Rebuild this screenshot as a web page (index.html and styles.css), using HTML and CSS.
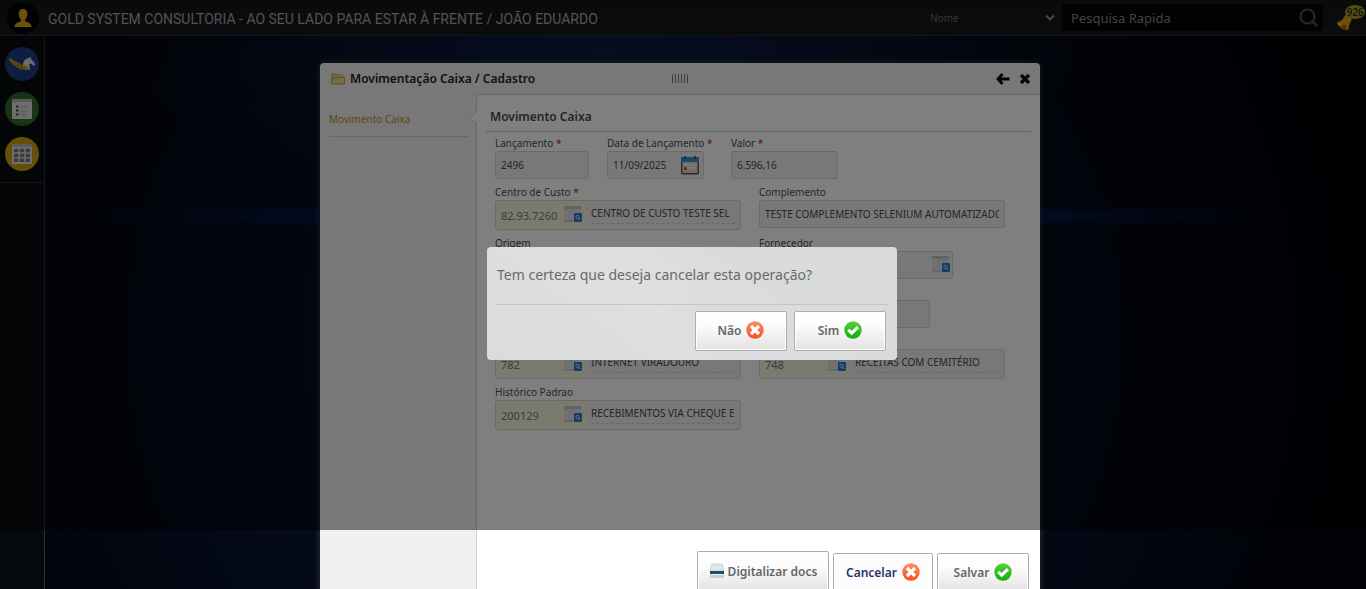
FILE: index.html
```html
<!DOCTYPE html>
<html lang="pt-BR">
<head>
<meta charset="utf-8">
<meta name="viewport" content="width=device-width, initial-scale=1">
<title>Movimentação Caixa / Cadastro</title>
<link rel="stylesheet" href="styles.css">
</head>
<body>
<svg class="defs" aria-hidden="true">
  <defs>
    <linearGradient id="gRed" x1="0" y1="0" x2="0" y2="1"><stop offset="0" stop-color="#ff8c62"/><stop offset="1" stop-color="#f4521e"/></linearGradient>
    <linearGradient id="gGreen" x1="0" y1="0" x2="0" y2="1"><stop offset="0" stop-color="#5bd03a"/><stop offset="1" stop-color="#12ae0c"/></linearGradient>
    <symbol id="no" viewBox="0 0 18 18"><circle cx="9" cy="9" r="8.7" fill="url(#gRed)"/><path d="M5 5l8 8M13 5l-8 8" stroke="#fff" stroke-width="3.2"/></symbol>
    <symbol id="yes" viewBox="0 0 18 18"><circle cx="9" cy="9" r="8.7" fill="url(#gGreen)"/><path d="M4.200 8.800l3.500 3.400 6.200-6" fill="none" stroke="#fff" stroke-width="3"/></symbol>
    <symbol id="lookup" viewBox="0 0 20 18"><rect x="1" y="0" width="17" height="15" rx="1" fill="#e2e3e7"/><path d="M1 3V1q0-1 1-1h15q1 0 1 1v2z" fill="#c6c7cc"/><path d="M7 4v10M12 4v10" stroke="#d6d7dc"/><path d="M1 15h10" stroke="#b4b6bb"/><rect x="11" y="7" width="8" height="9" rx="1" fill="#2f78d0"/><circle cx="14.600" cy="11" r="1.700" fill="none" stroke="#c8dff8" stroke-width="1"/><path d="M15.800 12.400l1.400 1.600" stroke="#c8dff8"/></symbol>
  </defs>
</svg>

<header class="topbar">
  <span class="avatar"><svg width="18" height="18" viewBox="0 0 18 18"><path d="M9 0c3 0 4.600 2 4.300 5-.1 2.700-1 4-2.100 5v2.300c2 1.200 6.300 1.700 6.300 5.700H.5c0-4 4.300-4.500 6.300-5.700V10C5.700 9 4.800 7.700 4.700 5 4.400 2 6 0 9 0z" fill="#d9a514"/></svg></span>
  <h1 class="company">GOLD SYSTEM CONSULTORIA - AO SEU LADO PARA ESTAR À FRENTE / JOÃO EDUARDO</h1>
  <div class="by">
    <select class="by-select" aria-label="Nome"><option>Nome</option></select>
    <svg class="by-arrow" width="10" height="8" viewBox="0 0 10 8"><path d="M1 1.500l4 4 4-4" fill="none" stroke="#8d8f90" stroke-width="2"/></svg>
  </div>
  <form class="search">
    <input class="search-input" type="text" placeholder="Pesquisa Rapida" aria-label="Pesquisa Rapida">
    <button class="icon-button" type="button" aria-label="Pesquisa"><svg width="20" height="20" viewBox="0 0 20 20"><circle cx="8.500" cy="8.500" r="7" fill="none" stroke="#4a4c4d" stroke-width="2.200"/><path d="M13.500 13.500l4.500 4.500" stroke="#4a4c4d" stroke-width="3"/></svg></button>
  </form>
  <button class="bell icon-button" type="button">
    <svg width="18" height="18" viewBox="0 0 18 18"><path d="M9.500 2c3-1.500 7 2 6 5-1.500 3-2.500 4-3 9.500L1.500 9.500C6 8 7.500 5 9.500 2z" fill="#d99f12"/><path d="M1 9.500c2-1 5 0 7 2s4.500 3 4.500 5c-4 1-11-3-11.500-7z" fill="#e0b020"/><ellipse cx="8" cy="14" rx="3" ry="2.500" fill="#b85f16"/></svg>
    <span class="badge">926</span>
  </button>
</header>

<div class="shell">
  <nav class="rail">
    <a class="app app-blue" href="#" aria-label="Gold"><svg width="28" height="16" viewBox="0 0 28 16"><path d="M1 2l13 7 5-1c2 1 3 3 3 6-8 0-11-1-12.500-2.500L8 11 7 9.500 5 9 4.500 7.500 3 7l-.3-1.700L1.500 4z" fill="#d2a52a"/><path d="M3 5l12 6M5 7.500l10 4.500M8 10l9 3" stroke="#8b6912" stroke-width=".7"/><path d="M15 9c0-4 3-7 6.500-7L23 .5V3l3 3 1 3-1 1-3-2.500-2 .5c1 2 .6 4 1 6-1-3-3-5-7-5z" fill="#d6d8dc"/></svg></a>
    <a class="app app-green" href="#" aria-label="Cadastros"><svg width="20" height="20" viewBox="0 0 20 20"><rect width="20" height="20" rx="1" fill="#dcdcdc"/><rect width="20" height="3" fill="#b5b5b5"/><path d="M4 7.500h2.500M4 11.500h2.500M4 15.500h2.500" stroke="#444" stroke-width="2"/><path d="M8 7h6M8 8.500h8M8 11h5M8 12.500h8M8 15h6M8 16.500h8" stroke="#b9b9b9" stroke-width=".8"/></svg></a>
    <a class="app app-gold" href="#" aria-label="Tabelas"><svg width="20" height="20" viewBox="0 0 20 20"><rect width="20" height="20" rx="1" fill="#dcdcdc"/><rect width="20" height="3" fill="#b5b5b5"/><path d="M2 6.500h16M2 11.500h16M2 16.300h16" stroke="#777" stroke-width="3.600" stroke-dasharray="4.400 1.400"/></svg></a>
  </nav>

  <main class="desktop">
    <section class="window">
      <header class="window-head">
        <svg width="14" height="13" viewBox="0 0 14 13"><path d="M1 11V2h4l1 1h6v3" fill="#e8cf86" stroke="#bf9d4e"/><path d="M8 1h4v3H8z" fill="#cfe3cf"/><path d="M.5 12V6.500h4l1-1h8V12z" fill="#f3d98c" stroke="#bf9d4e"/></svg>
        <h2 class="window-title">Movimentação Caixa / Cadastro</h2>
        <span class="grip"></span>
        <span class="window-tools">
          <button class="icon-button" type="button" aria-label="Voltar"><svg width="14" height="12" viewBox="0 0 14 12"><path d="M6.500 1L2 6l4.500 5M2 6h11.500" fill="none" stroke="#000" stroke-width="2.800"/></svg></button>
          <button class="icon-button" type="button" aria-label="Fechar"><svg width="12" height="12" viewBox="0 0 12 12"><path d="M2 2l8 8M10 2l-8 8" stroke="#111" stroke-width="3.400"/></svg></button>
        </span>
      </header>
      <div class="window-body">
        <nav class="tabs">
          <a class="tab" href="#">Movimento Caixa</a>
          <svg class="tab-arrow" width="10" height="12" viewBox="0 0 10 12"><path d="M10 1L1 6l9 5" fill="#fff" stroke="#ddd"/></svg>
        </nav>
        <form class="content">
          <h3 class="content-title">Movimento Caixa</h3>
          <div class="rows">
            <div class="row">
              <div class="field slot-a"><label class="label" for="lanc">Lançamento <i>*</i></label><input class="box" id="lanc" value="2496"></div>
              <div class="field slot-b"><label class="label" for="data">Data de Lançamento <i>*</i></label>
                <div class="box date"><input class="bare" id="data" value="11/09/2025"><button class="icon-button" type="button" aria-label="Data"><svg width="18" height="19" viewBox="0 0 18 19"><rect x=".7" y="1.700" width="16.600" height="16" rx="1" fill="#d8d8d8" stroke="#6d4a45" stroke-width="1.400"/><path d="M0 6V2q0-1 1-1h16q1 0 1 1v4z" fill="#3a92c4"/><path d="M4 0v3M14 0v3" stroke="#1a5c86" stroke-width="1.600"/><path d="M3 9h12M3 12h12" stroke="#f4f4f4" stroke-width="2"/><circle cx="4.500" cy="12.500" r="1.500" fill="#dc2f23"/></svg></button></div></div>
              <div class="field slot-c"><label class="label" for="valor">Valor <i>*</i></label><input class="box" id="valor" value="6.596,16"></div>
            </div>
            <div class="row">
              <div class="field half"><label class="label" for="centro">Centro de Custo <i>*</i></label>
                <div class="lookup"><span class="code"><input class="bare" id="centro" value="82.93.7260"><button class="icon-button" type="button" aria-label="Pesquisar"><svg width="20" height="18"><use href="#lookup"/></svg></button></span><input class="desc" aria-label="Centro de Custo" value="CENTRO DE CUSTO TESTE SEL" readonly></div></div>
              <div class="field half"><label class="label" for="compl">Complemento</label><input class="box" id="compl" value="TESTE COMPLEMENTO SELENIUM AUTOMATIZADO"></div>
            </div>
            <div class="row">
              <div class="field half"><label class="label" for="origem">Origem</label><input class="box short" id="origem"></div>
              <div class="field half"><label class="label" for="forn">Fornecedor</label>
                <div class="box date wide"><input class="bare" id="forn"><button class="icon-button" type="button" aria-label="Pesquisar"><svg width="20" height="18"><use href="#lookup"/></svg></button></div></div>
            </div>
            <div class="row">
              <div class="field half"><span class="label"></span></div>
              <div class="field half"><span class="label"></span><input class="box short" aria-label="Documento"></div>
            </div>
            <div class="row">
              <div class="field half"><span class="label"></span>
                <div class="lookup"><span class="code"><input class="bare" aria-label="Código" value="782"><button class="icon-button" type="button" aria-label="Pesquisar"><svg width="20" height="18"><use href="#lookup"/></svg></button></span><input class="desc" aria-label="Descrição" value="INTERNET VIRADOURO" readonly></div></div>
              <div class="field half"><span class="label"></span>
                <div class="lookup"><span class="code"><input class="bare" aria-label="Código" value="748"><button class="icon-button" type="button" aria-label="Pesquisar"><svg width="20" height="18"><use href="#lookup"/></svg></button></span><input class="desc" aria-label="Descrição" value="RECEITAS COM CEMITÉRIO" readonly></div></div>
            </div>
            <div class="row">
              <div class="field half"><label class="label" for="hist">Histórico Padrao</label>
                <div class="lookup"><span class="code"><input class="bare" id="hist" value="200129"><button class="icon-button" type="button" aria-label="Pesquisar"><svg width="20" height="18"><use href="#lookup"/></svg></button></span><input class="desc" aria-label="Histórico Padrao" value="RECEBIMENTOS VIA CHEQUE E" readonly></div></div>
            </div>
          </div>
          <footer class="actions">
            <button class="button scan" type="button"><svg width="16" height="16" viewBox="0 0 16 16"><path d="M3 1h10l2 7H1z" fill="#e2e5e8" stroke="#b9bec3" stroke-width=".6"/><path d="M1 8h14v6q0 1-1 1H2q-1 0-1-1z" fill="#c9cdd2"/><path d="M1 8h14v3H1z" fill="#175069"/><path d="M2 11h12v1H2z" fill="#f3f6f8"/></svg>Digitalizar docs</button>
            <button class="button cancel" type="button">Cancelar<svg width="18" height="18"><use href="#no"/></svg></button>
            <button class="button" type="button">Salvar<svg width="18" height="18"><use href="#yes"/></svg></button>
          </footer>
        </form>
      </div>
    </section>
  </main>
</div>

<div class="overlay"></div>
<div class="dialog" role="alertdialog" aria-labelledby="question">
  <p class="question" id="question">Tem certeza que deseja cancelar esta operação?</p>
  <div class="answers">
    <button class="button" type="button">Não<svg width="18" height="18"><use href="#no"/></svg></button>
    <button class="button" type="button">Sim<svg width="18" height="18"><use href="#yes"/></svg></button>
  </div>
</div>
</body>
</html>
```
FILE: styles.css
```css
* { box-sizing: border-box; }

body {
  margin: 0;
  height: 100vh;
  overflow: hidden;
  position: relative;
  display: flex;
  flex-direction: column;
  background: #010208;
  font-family: "Noto Sans", "Open Sans", sans-serif;
  font-size: 10px;
  color: #555;
}

h1, h2, h3, p { margin: 0; }
svg { display: block; flex: none; }
input, button, select { font: inherit; color: inherit; }
.defs { position: absolute; width: 0; height: 0; }

.icon-button {
  display: flex;
  padding: 0;
  border: 0;
  background: none;
}

/* Top bar */
.topbar {
  display: flex;
  align-items: center;
  flex: none;
  height: 36px;
  padding-left: 7px;
  background: linear-gradient(#101417, #16191b);
  border-bottom: 1px solid #2b2b2b;
}
.avatar {
  display: flex;
  align-items: center;
  justify-content: center;
  width: 32px;
  height: 32px;
  border-radius: 50%;
  background: #050505;
}
.company {
  flex: 1;
  padding: 2px 0 0 9px;
  font: 14px Roboto, "Open Sans", sans-serif;
  white-space: nowrap;
  color: #a4a6a8;
}
.by {
  display: flex;
  align-items: center;
  width: 125px;
  margin-right: 7px;
}
.by-select {
  flex: 1;
  min-width: 0;
  appearance: none;
  border: 0;
  padding: 0;
  background: none;
  color: #717171;
}
.search {
  display: flex;
  align-items: center;
  width: 261px;
  height: 27px;
  padding: 0 4px 0 9px;
  border-radius: 3px;
  background: #050505;
}
.search-input {
  flex: 1;
  min-width: 0;
  border: 0;
  padding: 0;
  background: none;
  font-size: 13px;
}
.search-input::placeholder { color: #858585; opacity: 1; }
.bell {
  position: relative;
  align-items: flex-end;
  width: 30px;
  height: 26px;
  margin-left: 13px;
}
.badge {
  position: absolute;
  top: 0;
  right: 1px;
  width: 20px;
  border-radius: 50%;
  background: #aa9a1c;
  color: #303030;
  font-size: 10px;
  font-weight: 600;
  line-height: 14px;
  text-align: center;
}

/* Left rail and desktop */
.shell { flex: 1; display: flex; min-height: 0; }
.rail {
  flex: none;
  width: 45px;
  display: flex;
  flex-direction: column;
  align-items: center;
  gap: 11px;
  padding-top: 11px;
  border-right: 1px solid #2e3032;
  background: linear-gradient(#2a2a2a, #2a2a2a) 0 146px / 100% 1px no-repeat, #070a0d;
}
.app {
  display: flex;
  align-items: center;
  justify-content: center;
  width: 34px;
  height: 34px;
  border-radius: 50%;
}
.app-blue { background: #1c3c7c; }
.app-green { background: #2f6a29; }
.app-gold { background: #cda013; }
.desktop {
  flex: 1;
  padding: 27px 0 0 275px;
  background:
    radial-gradient(ellipse 620px 14px at 638px 180px, rgba(8, 50, 160, .7), transparent),
    radial-gradient(ellipse 480px 160px at 560px 20px, rgba(18, 42, 96, .5), transparent),
    radial-gradient(ellipse 720px 700px at 580px 300px, #071430, #010207);
}

/* Window */
.window {
  width: 720px;
  border-radius: 4px;
  background: #f0f0f0;
  box-shadow: 0 0 6px #3a3a34;
}
.window-head {
  display: flex;
  align-items: center;
  height: 31px;
  padding: 0 9px 0 11px;
  gap: 5px;
}
.window-title {
  width: 317px;
  font-size: 12px;
  font-weight: 600;
  line-height: 16px;
  color: #222;
}
.grip {
  width: 16px;
  height: 9px;
  background: repeating-linear-gradient(90deg, #808080 0 1px, transparent 1px 3px);
}
.window-tools { display: flex; align-items: center; gap: 9px; margin-left: auto; }
.window-body { display: flex; }
.tabs { position: relative; flex: none; width: 156px; padding: 17px 8px 0 9px; }
.tab {
  display: block;
  padding-bottom: 9px;
  border-bottom: 1px solid #ccc;
  font-size: 10px;
  line-height: 16px;
  text-decoration: none;
  color: #b8922c;
}
.tab-arrow { position: absolute; top: 18px; right: -1px; }
.content {
  flex: 1;
  min-width: 0;
  display: flex;
  flex-direction: column;
  border: 1px solid #d0d0d0;
  border-width: 1px 0 0 1px;
  border-radius: 4px 0 0 0;
  background: #fff;
  padding: 13px 9px 0;
}
.content-title {
  padding: 0 4px 5px;
  border-bottom: 1px solid #c4c4c4;
  font-size: 12px;
  font-weight: 600;
  line-height: 18px;
  color: #4a4a4a;
}

/* Form */
.rows { display: flex; flex-direction: column; gap: 7px; min-height: 414px; padding: 5px 9px 0; }
.row { display: flex; }
.slot-a { width: 94px; margin-right: 18px; }
.slot-b { width: 124px; }
.slot-c { width: 107px; }
.half { width: 246px; margin-right: 18px; }
.half:last-child { margin-right: 0; }
.label { display: block; height: 14px; font-size: 10px; line-height: 12px; white-space: nowrap; color: #4c4c4c; }
.label i { font-style: normal; color: #b3302a; }
.box {
  display: block;
  width: 100%;
  height: 28px;
  padding: 0 5px;
  border: 1px solid #d4d4d4;
  border-radius: 3px;
  background: #f0f0f0;
  font-size: 10px;
  color: #4a4a4a;
}
.date { display: flex; align-items: center; width: 97px; padding-right: 4px; }
.wide { width: 194px; padding-right: 1px; }
.short { width: 171px; }
.bare { flex: 1; min-width: 0; width: 0; padding: 0; border: 0; background: none; }
.lookup {
  display: flex;
  height: 30px;
  border: 1px solid #d4d4d4;
  border-radius: 3px;
  background: #f0f0f0;
}
.code {
  display: flex;
  align-items: center;
  width: 91px;
  padding: 0 4px 0 5px;
  background: #f7f4df;
}
.code .bare { font-size: 11px; line-height: 16px; padding-top: 2px; color: #777; }
.desc {
  flex: 1;
  min-width: 0;
  height: 22px;
  margin: 1px 5px 0 4px;
  padding: 0;
  border: 0;
  border-bottom: 1px dashed #d0d0d0;
  background: none;
  color: #4a4a4a;
}

/* Buttons */
.button {
  display: flex;
  align-items: center;
  justify-content: center;
  gap: 5px;
  width: 92px;
  height: 40px;
  padding: 0 0 2px;
  border: 1px solid #adadad;
  border-radius: 2px;
  background: linear-gradient(#fff, #fcfcfc 35%, #e2e2e2);
  box-shadow: inset 0 0 0 1px #fff;
  font-size: 12px;
  font-weight: 600;
  color: #666;
  white-space: nowrap;
}
.scan { width: 132px; height: 42px; gap: 3px; }
.cancel { width: 100px; background: #fcfcfd; color: #2a3270; }
.actions { display: flex; align-items: flex-end; justify-content: flex-end; gap: 4px; padding: 5px 2px 20px; }

/* Confirmation */
.overlay { position: absolute; inset: 0 0 auto; height: 90%; background: rgba(0, 0, 0, .5); }
.dialog {
  position: absolute;
  top: 247px;
  left: calc(50% - 196px);
  width: 410px;
  padding: 17px 9px 9px;
  border-radius: 4px;
  background:
    linear-gradient(75deg, transparent 50%, rgba(215, 217, 219, .5) 52%),
    linear-gradient(35deg, #d9dcdb, #dedfdf 40%, #d9dbdc);
}
.question {
  padding: 0 1px 18px;
  border-bottom: 1px solid #c3c4c4;
  font-size: 14px;
  line-height: 22px;
  color: #6a6a6a;
}
.answers { display: flex; justify-content: flex-end; gap: 7px; padding: 6px 2px 0; }
```
